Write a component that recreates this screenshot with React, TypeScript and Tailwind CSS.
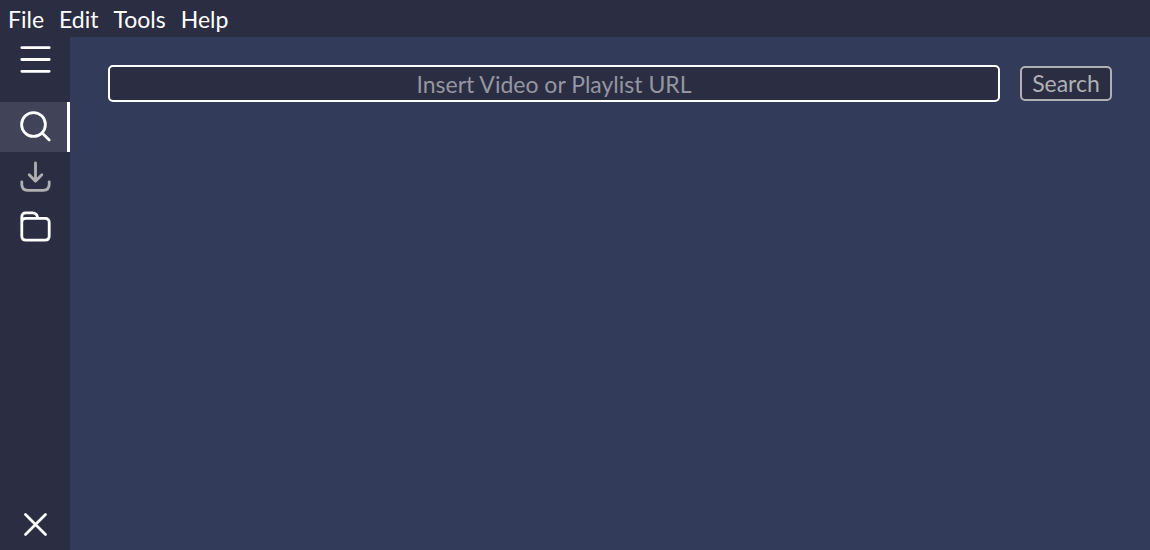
import type { ReactNode } from 'react';

const menus = ['File', 'Edit', 'Tools', 'Help'];

function Icon({ children }: { children: ReactNode }) {
  return (
    <svg
      width="34"
      height="34"
      viewBox="0 0 34 34"
      fill="none"
      stroke="currentColor"
      strokeWidth="2.8"
      strokeLinecap="round"
      strokeLinejoin="round"
      aria-hidden="true"
    >
      {children}
    </svg>
  );
}

function SideButton({ label, tone, children }: { label: string; tone: string; children: ReactNode }) {
  return (
    <button type="button" aria-label={label} className={`flex h-[50px] w-full items-center pl-[18px] ${tone}`}>
      <Icon>{children}</Icon>
    </button>
  );
}

export default function App() {
  return (
    <div className="flex h-screen flex-col bg-[#333b5a] font-['Lato',sans-serif] text-[23px] text-white">
      <nav className="flex h-[37px] shrink-0 items-center gap-[15px] bg-[#2b2d42] px-2">
        {menus.map((menu) => (
          <button key={menu} type="button" className="leading-7">
            {menu}
          </button>
        ))}
      </nav>
      <div className="flex min-h-0 flex-1">
        <aside className="flex w-[70px] shrink-0 flex-col bg-[#2b2d42]">
          <button type="button" aria-label="Toggle menu" className="flex h-[45px] w-full items-center pl-[18px]">
            <Icon>
              <path d="M3.8 4.7h27.4M3.8 16.5h27.4M3.8 28.3h27.4" />
            </Icon>
          </button>
          <div className="mt-5">
            <SideButton label="Search" tone="border-r-[3px] border-white bg-[#414459]">
              <circle cx="15.5" cy="14.5" r="11.9" />
              <path d="M24.2 23l7 7" />
            </SideButton>
            <SideButton label="Downloads" tone="text-[#b0b0b3]">
              <path d="M17.5 3v18.2M11.2 14.8l6.3 6.4 6.300-6.400M3.8 21.800v2.500q0 6 6 6h15.400q6 0 6-6v-2.500" />
            </SideButton>
            <SideButton label="Files" tone="text-white">
              <path d="M3.8 13V7Q3.8 2.900 7.800 2.900h6.500q5 0 5.500 5.500H27q4.200 0 4.200 4.200V26q0 4.200-4.200 4.200H8Q3.800 30.200 3.800 26V12Q3.800 8.400 7.800 8.400h12" />
            </SideButton>
          </div>
          <div className="mt-auto">
            <SideButton label="Close" tone="text-white">
              <path d="M7.5 6.5l20 20M27.5 6.5l-20 20" />
            </SideButton>
          </div>
        </aside>
        <main className="min-w-0 flex-1 px-[38px] pt-7">
          <form className="flex items-center gap-5" onSubmit={(event) => event.preventDefault()}>
            <input
              type="text"
              aria-label="Video or playlist URL"
              placeholder="Insert Video or Playlist URL"
              className="h-[37px] min-w-0 flex-1 rounded-[5px] border-2 border-white bg-[#2b2d42] px-2 text-center outline-none placeholder:text-[#9596a1]"
            />
            <button
              type="submit"
              className="flex h-[35px] w-[92px] shrink-0 items-center justify-center rounded-[5px] border-2 border-[#b0b0b3] bg-[#2b2d42] text-[#b0b0b3]"
            >
              Search
            </button>
          </form>
        </main>
      </div>
    </div>
  );
}
